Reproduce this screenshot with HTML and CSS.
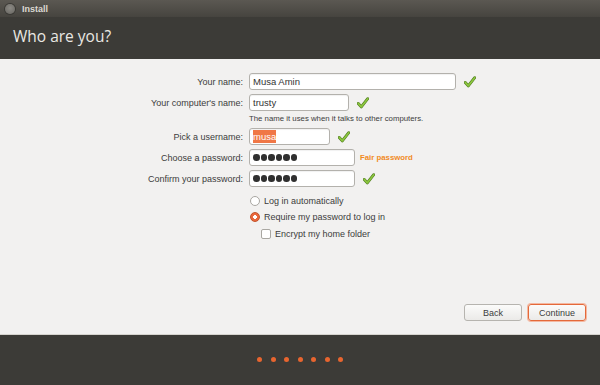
FILE: index.html
```html
<!DOCTYPE html>
<html>
<head>
  <title>Install</title>
  <link rel="stylesheet" href="styles.css">
</head>
<body>
  <!-- Window title bar -->
  <div class="titlebar">
    <span class="close-btn"></span>
    <span class="win-title">Install</span>
  </div>
  <!-- Page heading -->
  <header>
    <h1>Who are you?</h1>
  </header>
  <!-- Main form area -->
  <main class="content">
    <div class="form">
      <label class="lbl">Your name:</label>
      <div class="field">
        <div class="input w-name">Musa Amin</div>
        <svg class="check" viewBox="0 0 14 14"><path d="M1.5 7.5 L5 11.5 L12.5 2" fill="none" stroke="#4d7a1c" stroke-width="3.4" stroke-linecap="round" stroke-linejoin="round"/><path d="M1.5 7.5 L5 11.5 L12.5 2" fill="none" stroke="#8cc63f" stroke-width="2" stroke-linecap="round" stroke-linejoin="round"/></svg>
      </div>

      <label class="lbl">Your computer's name:</label>
      <div class="field">
        <div class="input w-comp">trusty</div>
        <svg class="check" viewBox="0 0 14 14"><path d="M1.5 7.5 L5 11.5 L12.5 2" fill="none" stroke="#4d7a1c" stroke-width="3.4" stroke-linecap="round" stroke-linejoin="round"/><path d="M1.5 7.5 L5 11.5 L12.5 2" fill="none" stroke="#8cc63f" stroke-width="2" stroke-linecap="round" stroke-linejoin="round"/></svg>
      </div>
      <span></span>
      <div class="hint">The name it uses when it talks to other computers.</div>

      <label class="lbl">Pick a username:</label>
      <div class="field">
        <div class="input w-user"><span class="selected">musa</span></div>
        <svg class="check" viewBox="0 0 14 14"><path d="M1.5 7.5 L5 11.5 L12.5 2" fill="none" stroke="#4d7a1c" stroke-width="3.4" stroke-linecap="round" stroke-linejoin="round"/><path d="M1.5 7.5 L5 11.5 L12.5 2" fill="none" stroke="#8cc63f" stroke-width="2" stroke-linecap="round" stroke-linejoin="round"/></svg>
      </div>

      <label class="lbl">Choose a password:</label>
      <div class="field">
        <div class="input w-pass"><span class="dots"><i></i><i></i><i></i><i></i><i></i><i></i></span></div>
        <span class="strength">Fair password</span>
      </div>

      <label class="lbl">Confirm your password:</label>
      <div class="field">
        <div class="input w-pass"><span class="dots"><i></i><i></i><i></i><i></i><i></i><i></i></span></div>
        <svg class="check" viewBox="0 0 14 14"><path d="M1.5 7.5 L5 11.5 L12.5 2" fill="none" stroke="#4d7a1c" stroke-width="3.4" stroke-linecap="round" stroke-linejoin="round"/><path d="M1.5 7.5 L5 11.5 L12.5 2" fill="none" stroke="#8cc63f" stroke-width="2" stroke-linecap="round" stroke-linejoin="round"/></svg>
      </div>

      <span></span>
      <div class="options">
        <div class="opt"><span class="radio"></span>Log in automatically</div>
        <div class="opt"><span class="radio on"></span>Require my password to log in</div>
        <div class="opt sub"><span class="checkbox"></span>Encrypt my home folder</div>
      </div>
    </div>

    <!-- Navigation buttons -->
    <div class="actions">
      <button class="btn">Back</button>
      <button class="btn btn-default">Continue</button>
    </div>
  </main>
  <!-- Slideshow progress dots -->
  <footer>
    <span class="dot"></span><span class="dot"></span><span class="dot"></span><span class="dot"></span><span class="dot"></span><span class="dot"></span><span class="dot"></span>
  </footer>
</body>
</html>
```

FILE: styles.css
```css
html, body {
  height: 100%;
}
body {
  margin: 0;
  font-family: 'Liberation Sans', Arial, sans-serif;
  font-size: 9px;
  color: #3c3c3c;
  background: #f2f1f0;
  display: flex;
  flex-direction: column;
  overflow: hidden;
}
.titlebar {
  height: 17px;
  background: linear-gradient(#5b5852, #46443f);
  display: flex;
  align-items: center;
  padding-left: 5px;
}
.close-btn {
  width: 10px;
  height: 10px;
  border-radius: 50%;
  background: radial-gradient(circle at 50% 40%, #8c8a85, #66645f);
  box-shadow: 0 0 0 1px #3a3935;
}
.win-title {
  margin-left: 7px;
  color: #dcd9d2;
  font-weight: bold;
  font-size: 9px;
}
header {
  height: 42px;
  background: #3c3b37;
  display: flex;
  align-items: center;
  padding-left: 13px;
}
header h1 {
  margin: 0 0 4px;
  font-family: 'Open Sans', 'Liberation Sans', sans-serif;
  font-weight: normal;
  font-size: 15.5px;
  color: #eae8e3;
}
.content {
  flex: 1;
  display: flex;
  flex-direction: column;
  padding: 14px 14px 13px 0;
}
.form {
  display: grid;
  grid-template-columns: 243px auto;
  column-gap: 6px;
  row-gap: 4px;
  align-items: center;
}
.lbl {
  text-align: right;
  white-space: nowrap;
}
.field {
  display: flex;
  align-items: center;
  height: 17px;
}
.input {
  box-sizing: border-box;
  height: 17px;
  background: #fff;
  border: 1px solid #b3b1ac;
  border-radius: 3px;
  box-shadow: inset 0 1px 1px rgba(0,0,0,0.06);
  padding: 0 3px;
  line-height: 15px;
  font-size: 9.5px;
  color: #333;
}
.w-name { width: 207px; }
.w-comp { width: 100px; }
.w-user { width: 81px; }
.w-pass { width: 106px; }
.check {
  width: 12px;
  height: 12px;
  margin-left: 8px;
}
.hint {
  font-size: 7.8px;
  color: #3c3c3c;
  margin: -3px 0 -1px;
  height: 13px;
  line-height: 13px;
}
.selected {
  background: #f07746;
  color: #fff;
  padding: 1px 0;
}
.dots {
  display: inline-flex;
  gap: 1px;
  vertical-align: middle;
  margin-top: -2px;
}
.dots i {
  width: 6.5px;
  height: 6.5px;
  border-radius: 50%;
  background: #2f2f2f;
}
.strength {
  margin-left: 5px;
  color: #f18b1f;
  font-weight: bold;
  font-size: 7.8px;
}
.options {
  display: flex;
  flex-direction: column;
  gap: 5.5px;
  margin-top: 4px;
}
.opt {
  display: flex;
  align-items: center;
  height: 11px;
  padding-left: 1px;
}
.opt.sub {
  padding-left: 12px;
}
.radio {
  box-sizing: border-box;
  width: 10px;
  height: 10px;
  border-radius: 50%;
  border: 1px solid #a9a7a2;
  background: #fff;
  margin-right: 4px;
}
.radio.on {
  border-color: #c4532a;
  background: radial-gradient(circle, #fff 0 1.6px, #e9683d 2px);
}
.checkbox {
  box-sizing: border-box;
  width: 10px;
  height: 10px;
  border-radius: 2px;
  border: 1px solid #a9a7a2;
  background: #fff;
  margin-right: 4px;
}
.actions {
  margin-top: auto;
  display: flex;
  justify-content: flex-end;
  gap: 6px;
}
.btn {
  box-sizing: border-box;
  width: 58px;
  height: 17px;
  font-family: 'Liberation Sans', Arial, sans-serif;
  font-size: 9px;
  color: #3c3c3c;
  background: linear-gradient(#fbfbfa, #ebeae8);
  border: 1px solid #b6b4af;
  border-radius: 3px;
  padding: 0;
}
.btn-default {
  border: 1px solid #e4693a;
  box-shadow: 0 0 0 1px #f4b8a0;
}
footer {
  height: 51px;
  background: #3c3b37;
  border-top: 1px solid #d6d4cf;
  box-sizing: border-box;
  display: flex;
  justify-content: center;
  align-items: center;
  gap: 8.5px;
  padding-bottom: 2px;
}
.dot {
  width: 5px;
  height: 5px;
  border-radius: 50%;
  background: #e8652f;
}
```
